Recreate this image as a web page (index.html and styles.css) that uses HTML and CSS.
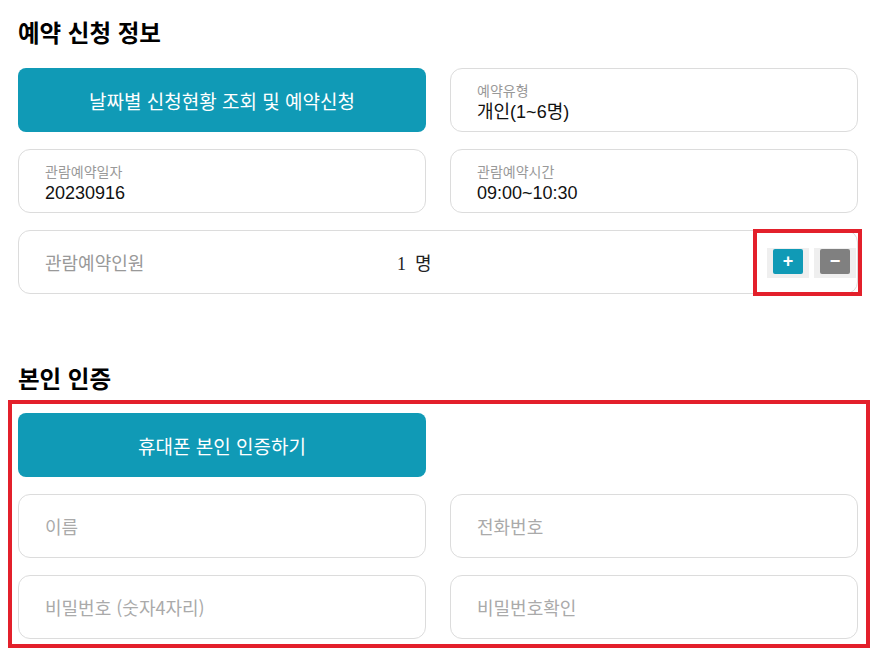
FILE: index.html
```html
<!DOCTYPE html>
<html lang="ko">
<head>
  <meta charset="UTF-8">
  <title>예약 신청</title>
  <link rel="stylesheet" href="styles.css">
</head>
<body>

<div class="page">
  <h2 class="section-title">예약 신청 정보</h2>
  <div class="form-grid">
    <button class="main-button">날짜별 신청현황 조회 및 예약신청</button>
    <div class="field">
      <div class="field-label">예약유형</div>
      <div class="field-value">개인(1~6명)</div>
    </div>
    <div class="field">
      <div class="field-label">관람예약일자</div>
      <div class="field-value">20230916</div>
    </div>
    <div class="field">
      <div class="field-label">관람예약시간</div>
      <div class="field-value">09:00~10:30</div>
    </div>
    <div class="count-row">
      <div class="count-label">관람예약인원</div>
      <div class="count-value">1&nbsp; 명</div>
      <div class="counter mark">
        <span class="count-btn-wrap"><button class="count-btn plus">+</button></span>
        <span class="count-btn-wrap"><button class="count-btn minus">−</button></span>
      </div>
    </div>
  </div>

  <h2 class="section-title second">본인 인증</h2>
  <div class="auth-box mark">
    <div class="form-grid">
      <button class="main-button">휴대폰 본인 인증하기</button>
      <div></div>
      <div class="input-box">이름</div>
      <div class="input-box">전화번호</div>
      <div class="input-box">비밀번호 (숫자4자리)</div>
      <div class="input-box">비밀번호확인</div>
    </div>
  </div>
</div>

</body>
</html>
```

FILE: styles.css
```css
body {
  margin: 0;
  font-family: "Liberation Sans", "Noto Sans CJK KR", sans-serif;
  background: #fff;
  color: #111;
}

.page {
  width: 840px;
  padding: 17px 0 0 18px;
}

.section-title {
  margin: 0 0 21px;
  font-family: "Noto Sans CJK KR", sans-serif;
  font-size: 23.5px;
  font-weight: bold;
  line-height: 30px;
  color: #000;
}

.section-title.second {
  margin-top: 69px;
  margin-bottom: 7px;
}

.form-grid {
  display: grid;
  grid-template-columns: 408px 408px;
  column-gap: 24px;
  row-gap: 17px;
}

.main-button {
  height: 64px;
  border: none;
  border-radius: 8px;
  background-color: #109ab6;
  color: #fff;
  font-family: "Noto Sans CJK KR", sans-serif;
  font-size: 19px;
  cursor: pointer;
}

.field, .input-box, .count-row {
  box-sizing: border-box;
  height: 64px;
  border: 1px solid #dcdcdc;
  border-radius: 12px;
  background: #fff;
}

.field {
  padding: 13px 26px 0;
}

.field-label {
  font-size: 14px;
  line-height: 18px;
  color: #999;
}

.field-value {
  font-size: 18px;
  line-height: 24px;
  color: #111;
}

.input-box {
  display: flex;
  align-items: center;
  padding-left: 26px;
  font-family: "Noto Sans CJK KR", sans-serif;
  font-size: 18px;
  color: #aaa;
}

.count-row {
  grid-column: 1 / 3;
  display: flex;
  align-items: center;
  padding-left: 26px;
}

.count-label {
  width: 352px;
  font-family: "Noto Sans CJK KR", sans-serif;
  font-size: 18px;
  color: #999;
}

.count-value {
  font-family: "Liberation Serif", "Noto Sans CJK KR", serif;
  font-size: 18px;
  color: #222;
}

.mark {
  border: 4px solid #e3202b;
}

.counter {
  align-self: stretch;
  margin: -2px -5px -3px auto;
  width: 91px;
  display: flex;
  align-items: center;
  gap: 5px;
  padding-left: 10px;
}

.count-btn-wrap {
  display: flex;
  padding: 1px 6px 4px;
  background: #efefef;
}

.count-btn {
  width: 30px;
  height: 25px;
  padding: 0;
  border: none;
  border-radius: 2px;
  color: #fff;
  font-size: 18px;
  font-weight: bold;
  line-height: 25px;
  cursor: pointer;
}

.count-btn.plus {
  background-color: #109ab6;
}

.count-btn.minus {
  background-color: #808080;
}

.auth-box {
  margin: 0 -12px 0 -10px;
  padding: 9px 8px 5px 6px;
}
```
